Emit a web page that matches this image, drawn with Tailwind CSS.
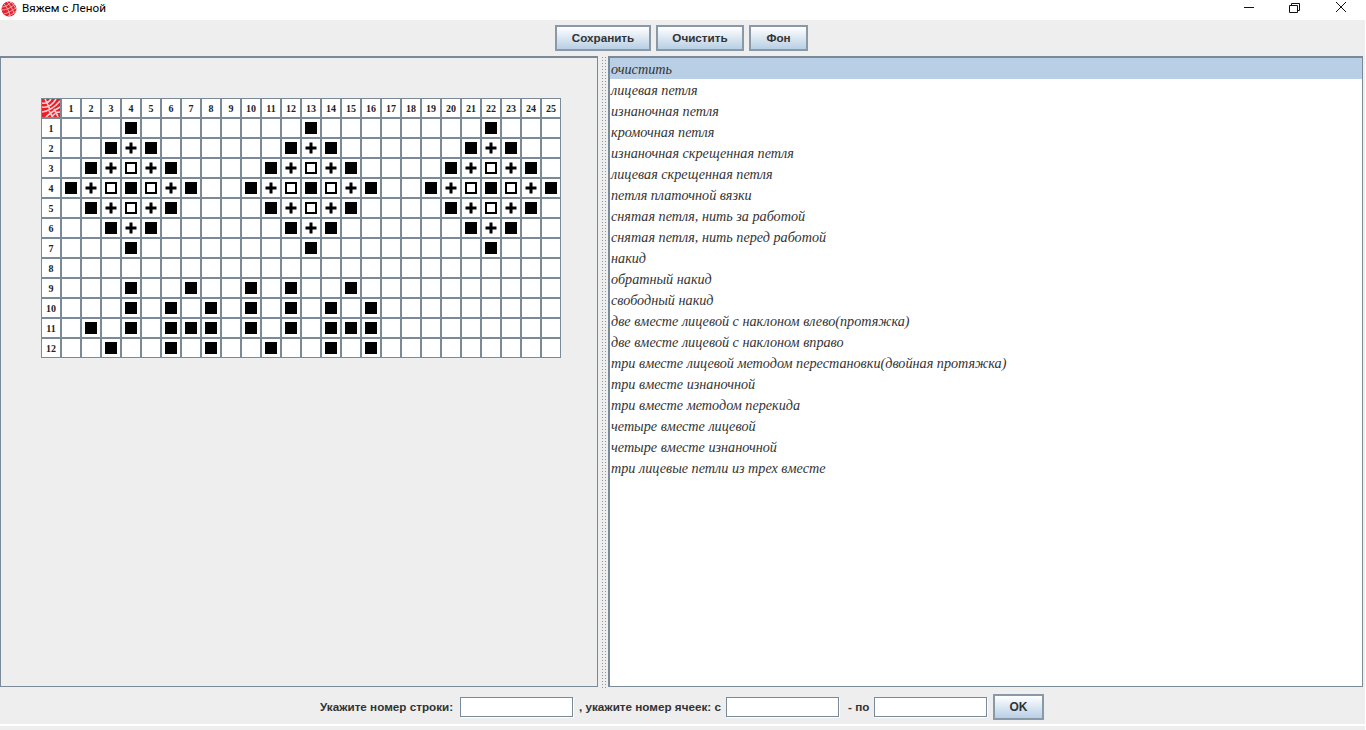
<!DOCTYPE html>
<html lang="ru">
<head>
<meta charset="UTF-8">
<title>Вяжем с Леной</title>
<script src="https://cdn.jsdelivr.net/npm/@tailwindcss/browser@4"></script>
</head>
<body class="w-[1366px] h-[730px] overflow-hidden bg-white font-['Liberation_Sans',sans-serif]">

<!-- Title bar -->
<div class="h-5 flex items-start bg-white">
  <svg class="ml-[1px] mt-[1px] w-[16px] h-[16px]" viewBox="0 0 16 16">
    <circle cx="8" cy="8" r="7.500" fill="#e2222c"/>
    <path d="M1 6C4 6 8 4 10 1M1 9C6 9 11 6 14 3M3 13C7 12 12 9 15 7M7 15C10 14 13 12 15 10M3 3C6 6 8 10 9 15M6 1C9 4 12 8 13 13M10 1C12 3 14 6 15 8" stroke="#f2a8ac" stroke-width="1" fill="none"/>
  </svg>
  <span class="ml-[5px] text-[11.7px] leading-[16px] text-black font-['Roboto',sans-serif]">Вяжем с Леной</span>
  <div class="ml-auto flex items-center mr-[-1px]">
    <svg class="w-[46px] h-5" viewBox="0 0 46 20"><path d="M14 7.500 H24" stroke="#111" fill="none"/></svg>
    <svg class="w-[46px] h-5" viewBox="0 0 46 20"><path d="M13.500 5.500 H21.500 V12.500 H13.500 Z M15.500 5.500 V3.500 H23.500 V10.500 H21.500" stroke="#111" fill="none"/></svg>
    <svg class="w-[46px] h-5 mr-[-1px]" viewBox="0 0 46 20"><path d="M14 2 L24 12 M24 2 L14 12" stroke="#111" fill="none"/></svg>
  </div>
</div>

<div class="w-[1365px]">
<!-- Toolbar -->
<div class="h-9 bg-[#eeeeee] flex justify-center items-start pt-[5px] gap-[5px] pr-[2px]">
  <button class="w-[96px] h-[26px] border-2 border-[#8a99a8] bg-linear-to-b from-white to-[#b8cfe5] text-[11.7px] font-bold text-[#333333]">Сохранить</button>
  <button class="w-[88px] h-[26px] border-2 border-[#8a99a8] bg-linear-to-b from-white to-[#b8cfe5] text-[11.7px] font-bold text-[#333333]">Очистить</button>
  <button class="w-[59px] h-[26px] border-2 border-[#8a99a8] bg-linear-to-b from-white to-[#b8cfe5] text-[11.7px] font-bold text-[#333333]">Фон</button>
</div>

<!-- Main split -->
<div class="h-[632px] flex bg-[#eeeeee]">
  <div class="w-[598px] h-[631px] border border-t-2 border-[#7a8a99] pl-[40px] pt-[40px]">
    <div id="grid" class="w-[520px] grid grid-cols-[repeat(26,20px)] grid-rows-[repeat(13,20px)]"></div>
  </div>
  <div class="w-[10px] flex justify-center">
    <div class="w-[5px] h-full bg-[radial-gradient(#8a98a6_1px,transparent_1px)] bg-[length:3px_3px]"></div>
  </div>
  <div class="w-[755px] h-[631px] border border-t-2 border-l-2 border-[#7a8a99] bg-white">
    <ul id="list" class="font-['Liberation_Serif',serif] italic text-[14.2px] text-[#333333] leading-[23px]"></ul>
  </div>
</div>

<!-- Bottom bar -->
<div class="h-[38px] pt-[2px] bg-[#eeeeee] flex items-center pl-[320px] text-[11.7px] font-bold text-[#333333] border-b-2 border-white whitespace-nowrap">
  <span class="w-[140px]">Укажите номер строки:</span>
  <input class="w-[113px] h-[20px] bg-white border border-[#7a8a99] shadow-[1px_1px_0_#ffffff]">
  <span class="w-[147px] ml-[6px]">, укажите номер ячеек: с</span>
  <input class="w-[113px] h-[20px] bg-white border border-[#7a8a99] shadow-[1px_1px_0_#ffffff]">
  <span class="w-[26px] ml-[9px]">- по</span>
  <input class="w-[113px] h-[20px] bg-white border border-[#7a8a99] shadow-[1px_1px_0_#ffffff]">
  <button class="ml-[6px] w-[51px] h-[26px] border-2 border-[#8a99a8] bg-linear-to-b from-white to-[#b8cfe5] text-[12px] font-bold text-[#333333]">OK</button>
</div>
<div class="h-[4px] bg-[#eeeeee]"></div>
</div>

<script>
const rows = {
  1: "4B 13B 22B",
  2: "3B 4P 5B 12B 13P 14B 21B 22P 23B",
  3: "2B 3P 4O 5P 6B 11B 12P 13O 14P 15B 20B 21P 22O 23P 24B",
  4: "1B 2P 3O 4B 5O 6P 7B 10B 11P 12O 13B 14O 15P 16B 19B 20P 21O 22B 23O 24P 25B",
  5: "2B 3P 4O 5P 6B 11B 12P 13O 14P 15B 20B 21P 22O 23P 24B",
  6: "3B 4P 5B 12B 13P 14B 21B 22P 23B",
  7: "4B 13B 22B",
  8: "",
  9: "4B 7B 10B 12B 15B",
  10: "4B 6B 8B 10B 12B 14B 16B",
  11: "2B 4B 6B 7B 8B 10B 12B 14B 15B 16B",
  12: "3B 6B 8B 11B 14B 16B"
};
const cellClass = "flex items-center justify-center bg-white border border-[#7a8a99] font-['Liberation_Serif',serif] font-bold text-[10px] text-[#222222]";
const symbols = {
  B: '<div class="w-3 h-3 bg-black"></div>',
  O: '<div class="w-3 h-3 border-2 border-black"></div>',
  P: '<svg class="w-3 h-3" viewBox="0 0 12 12"><path d="M0.500 6H11.500M6 0.500V11.500" stroke="#000" stroke-width="3" fill="none"/></svg>'
};
const yarn = '<svg class="w-[18px] h-[18px]" viewBox="0 0 18 18"><rect width="18" height="18" fill="#ee1c25"/><path d="M0 4C4 5 7 3 9 0M0 8C6 9 11 5 14 0M0 13C6 12 13 8 18 2M4 18C8 14 13 11 18 8M10 18C12 15 15 13 18 13M3 0C5 4 7 8 8 11M12 10C14 13 15 15 16 18M7 12C9 14 10 16 10 18" stroke="#f8d4d6" stroke-width="1.600" fill="none"/></svg>';

let html = `<div class="${cellClass}">${yarn}</div>`;
for (let c = 1; c <= 25; c++) html += `<div class="${cellClass}">${c}</div>`;
for (let r = 1; r <= 12; r++) {
  html += `<div class="${cellClass}">${r}</div>`;
  const marks = {};
  rows[r].split(" ").filter(Boolean).forEach((m) => { marks[parseInt(m)] = m.slice(-1); });
  for (let c = 1; c <= 25; c++) html += `<div class="${cellClass}">${marks[c] ? symbols[marks[c]] : ""}</div>`;
}
document.getElementById("grid").innerHTML = html;

const items = ["очистить","лицевая петля","изнаночная петля","кромочная петля","изнаночная скрещенная петля","лицевая скрещенная петля","петля платочной вязки","снятая петля, нить за работой","снятая петля, нить перед работой","накид","обратный накид","свободный накид","две вместе лицевой с наклоном влево(протяжка)","две вместе лицевой с наклоном вправо","три вместе лицевой методом перестановки(двойная протяжка)","три вместе изнаночной","три вместе методом перекида","четыре вместе лицевой","четыре вместе изнаночной","три лицевые петли из трех вместе"];
document.getElementById("list").innerHTML = items.map((t, i) =>
  `<li class="h-[21px] pl-[1px] ${i === 0 ? "bg-[#b8cfe5]" : ""}">${t}</li>`).join("");
</script>
</body>
</html>
